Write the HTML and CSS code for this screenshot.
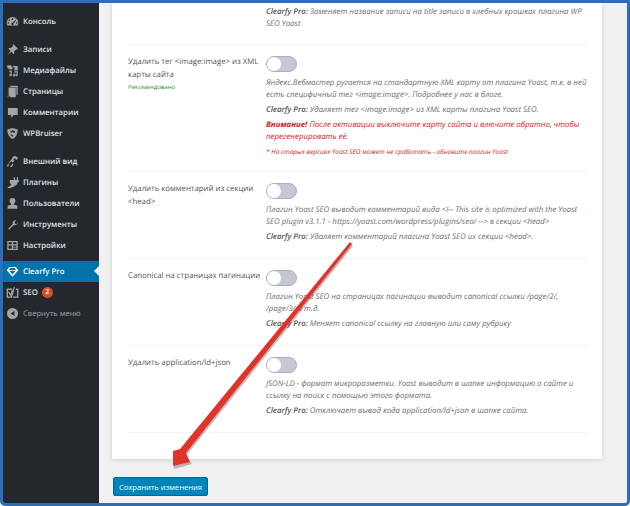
FILE: index.html
```html
<!DOCTYPE html>
<html lang="ru">
<head>
<meta charset="utf-8">
<title>Clearfy Pro</title>
<link rel="stylesheet" href="styles.css">
</head>
<body>
<div class="frame">
  <nav class="sidebar">
    <ul class="menu">
      <li class="item"><svg class="ico" viewBox="0 0 20 20"><path d="M10 3a9 9 0 0 0-9 9c0 1.600.4 3 1.200 4.300h15.600A9 9 0 0 0 19 12a9 9 0 0 0-9-9zm0 2a1.300 1.300 0 1 1 0 2.600A1.300 1.300 0 0 1 10 5zM5 7a1.200 1.200 0 1 1 0 2.400A1.200 1.200 0 0 1 5 7zm9.500.5 1 .8-4 4.700a1.700 1.700 0 1 1-1.200-1zM3.500 11a1.200 1.200 0 1 1 0 2.400 1.200 1.200 0 0 1 0-2.400zm13 0a1.200 1.200 0 1 1 0 2.400 1.200 1.200 0 0 1 0-2.400z" fill-rule="evenodd"/></svg>Консоль</li>
      <li class="sep"></li>
      <li class="item"><svg class="ico" viewBox="0 0 20 20"><path d="M11 1.500 18.500 9l-1.300 1.300-1.200-.6-3.500 3.500c.5 1.500.3 3-.6 4L8.200 13.500 2 18.500l5-6.200L3.300 8.600c1-.9 2.500-1.100 4-.6l3.500-3.500-.6-1.200z"/></svg>Записи</li>
      <li class="item"><svg class="ico" viewBox="0 0 20 20"><path d="M2 2h6v2h2v4H4V6H2zm9 1h7v7h-5V5h-2zM5 10h4v7a2 2 0 1 1-2-2V12H5zm8 1h5v6a1.800 1.800 0 1 1-1.500-1.800V13H14v4.500a1.800 1.800 0 1 1-1-1.600z"/></svg>Медиафайлы</li>
      <li class="item"><svg class="ico" viewBox="0 0 20 20"><path d="M7 1h11v14h-2V3H7zM4 4h11v15H7l-3-3zm-2 2v11l2 2h1l-3-3z"/></svg>Страницы</li>
      <li class="item"><svg class="ico" viewBox="0 0 20 20"><path d="M3 3h15v11h-6l-4 4.500V14H3z"/></svg>Комментарии</li>
      <li class="item"><svg class="ico" viewBox="0 0 20 20"><path d="M10 1.500 18 4c0 7-2.500 12-8 14.500C4.500 16 2 11 2 4zm0 3.500L6 7.500 8 9l2-1.500 2.500 2 1.500-3zM6 11l4 4.500 1-3z" fill-rule="evenodd"/></svg>WPBruiser</li>
      <li class="sep"></li>
      <li class="item"><svg class="ico" viewBox="0 0 20 20"><path d="M13 1.500c2.500 0 5 1.500 5.500 3.500L16 7.500 13.500 5 11 7l2 2-2.500 2.500L8 9.500 4 13.500c.5 1.500.5 3-1 5l-1.500-2 5.500-8.500 2-2c.5-2 2-4.500 4-4.500zM10 13l1.500 1.500-3 4H6z"/></svg>Внешний вид</li>
      <li class="item"><svg class="ico" viewBox="0 0 20 20"><path d="M12 2h2v4h2.500V2h2v4.500H20V9l-2 .5c-.5 3-2.500 5-5 5.500v1c-3 .5-6 3-9 3l-2-2c3-1 5-1.500 6-4-1.500-1-2.500-3-2.500-4.500H6V6h6z"/></svg>Плагины</li>
      <li class="item"><svg class="ico" viewBox="0 0 20 20"><path d="M10 1.500a4.500 4.500 0 0 1 4.500 4.700c0 2-1.200 3.600-2.500 4.300v1.500l5.500 1.500V18h-15v-4.500L8 12v-1.500C6.700 9.800 5.500 8.200 5.500 6.200A4.500 4.500 0 0 1 10 1.500z"/></svg>Пользователи</li>
      <li class="item"><svg class="ico" viewBox="0 0 20 20"><path d="M18 5.500c.4 2-.2 4-2 5-1.300.8-3 .8-4 .4l-6.500 6.500c-1 1-2.500-.4-1.500-1.700l6.400-6.500c-.5-1.500-.2-3 .8-4.200 1.200-1.500 3-2 5-1.500L13 6.200l1 2.500 2.500.8z"/></svg>Инструменты</li>
      <li class="item"><svg class="ico" viewBox="0 0 20 20"><path d="M2 3h16v14H2zm2 2v3h5V5zm7 0v3h5V5zm-7 5v5h5v-5zm7 0v2h5v-2zm0 3v2h5v-2z" fill-rule="evenodd"/></svg>Настройки</li>
      <li class="sep sep-last"></li>
      <li class="item active"><svg class="ico" viewBox="0 0 20 20"><path d="M5 3h10l4 5-9 10L1 8zm1.500 1.700L4.700 7.500h10.600l-1.800-2.800zM5 9l5 5.700L15 9z" fill-rule="evenodd"/></svg>Clearfy Pro</li>
      <li class="item"><svg class="ico" viewBox="0 0 20 20"><path d="M1 4h9l-1 2H3v10h5l-1 2H1zm11-2h2L9 18H7zm4 2h3v14h-9l1-2h6V6h-2zm-11 5 2 3 2-6h2l-4 10H7L3 9z" fill-rule="evenodd"/></svg>SEO<span class="badge">2</span></li>
      <li class="item collapse"><svg class="ico" viewBox="0 0 20 20"><path d="M10 1.500a8.500 8.500 0 1 1 0 17 8.500 8.500 0 0 1 0-17zM13 6l-6 4 6 4z" fill-rule="evenodd"/></svg>Свернуть меню</li>
    </ul>
  </nav>
  <main class="content">
    <section class="card">
      <div class="row row-cut">
        <div class="label"></div>
        <div class="body">
          <p class="desc"><b>Clearfy Pro:</b> Заменяет название записи на title записи в хлебных крошках плагина WP SEO Yoast</p>
        </div>
      </div>
      <div class="row">
        <div class="label">Удалить тег &lt;image:image&gt; из XML карты сайта<span class="rec">Рекомендовано</span></div>
        <div class="body">
          <span class="toggle"></span>
          <p class="desc">Яндекс.Вебмастер ругается на стандартную XML карту от плагина Yoast, т.к. в ней есть специфичный тег &lt;image:image&gt;. Подробнее у нас в блоге.</p>
          <p class="desc"><b>Clearfy Pro:</b> Удаляет тег &lt;image:image&gt; из XML карты плагина Yoast SEO.</p>
          <p class="desc warn"><b>Внимание!</b> После активации выключите карту сайта и влючите обратно, чтобы перегенерировать её.</p>
          <p class="desc warn small">* На старых версиях Yoast SEO может не сработать - обновите плагин Yoast</p>
        </div>
      </div>
      <div class="row">
        <div class="label">Удалить комментарий из секции &lt;head&gt;</div>
        <div class="body">
          <span class="toggle"></span>
          <p class="desc">Плагин Yoast SEO выводит комментарий вида &lt;!-- This site is optimized with the Yoast SEO plugin v3.1.1 - https://yoast.com/wordpress/plugins/seo/ --&gt; в секции &lt;head&gt;</p>
          <p class="desc"><b>Clearfy Pro:</b> Удаляет комментарий плагина Yoast SEO их секции &lt;head&gt;.</p>
        </div>
      </div>
      <div class="row">
        <div class="label">Canonical на страницах пагинации</div>
        <div class="body">
          <span class="toggle"></span>
          <p class="desc">Плагин Yoast SEO на страницах пагинации выводит canonical ссылки /page/2/, /page/3/ и т.д.</p>
          <p class="desc"><b>Clearfy Pro:</b> Меняет canonical ссылку на главную или саму рубрику</p>
        </div>
      </div>
      <div class="row">
        <div class="label">Удалить application/ld+json</div>
        <div class="body">
          <span class="toggle"></span>
          <p class="desc">JSON-LD - формат микроразметки. Yoast выводит в шапке информацию о сайте и ссылку на поиск с помощью этого формата.</p>
          <p class="desc"><b>Clearfy Pro:</b> Отключает вывод кода application/ld+json в шапке сайта.</p>
        </div>
      </div>
    </section>
    <button class="save" type="button">Сохранить изменения</button>
  </main>
  <svg class="arrow" viewBox="0 0 630 506" width="630" height="506">
    <path class="arrow-shadow" d="M353 246 186 456 192 464 174 469 174 452 181 451 350 243z"/>
    <path class="arrow-fill" d="M352 244 186 453 190 462 173 466 173 451 180 449 350 242z"/>
  </svg>
</div>
</body>
</html>
```
FILE: styles.css
```css
* { box-sizing: border-box; }
html, body { margin: 0; padding: 0; }
body {
  width: 630px;
  height: 506px;
  overflow: hidden;
  font-family: "Open Sans", sans-serif;
  text-rendering: geometricPrecision;
  background: #fff;
}
.frame {
  position: relative;
  display: flex;
  width: 630px;
  height: 506px;
  border: 3px solid #2b6fbb;
  border-radius: 0 0 5px 5px;
  overflow: hidden;
  background: #f1f1f1;
}
.sidebar { width: 96px; flex: none; background: #23282d; }
.menu { list-style: none; margin: 0; padding: 8px 0 0; }
.item {
  position: relative;
  display: flex;
  align-items: center;
  height: 21px;
  padding-left: 3px;
  font-size: 7.800px;
  font-weight: 600;
  color: #dfe1e3;
  white-space: nowrap;
}
.ico { width: 13px; height: 13px; margin-right: 4px; flex: none; fill: #a0a5aa; }
.sep { height: 7px; }
.sep-last { height: 5px; }
.active { background: #0073aa; color: #fff; }
.active .ico { fill: #fff; }
.active::after {
  content: "";
  position: absolute;
  right: 0;
  top: 5px;
  border: 5px solid transparent;
  border-left: 0;
  border-right-color: #f1f1f1;
}
.badge {
  display: inline-block;
  width: 11px;
  height: 11px;
  margin-left: 4px;
  border-radius: 50%;
  background: #d54e21;
  color: #fff;
  font-size: 7px;
  line-height: 11px;
  text-align: center;
}
.collapse { color: #a0a5aa; font-weight: 400; font-size: 7.600px; }
.content { flex: 1; min-width: 0; padding: 0 25px 0 13px; }
.card {
  height: 456px;
  padding: 0 15px 0 16px;
  background: #fff;
  box-shadow: 0 1px 5px rgba(0, 0, 0, .14);
}
.row {
  display: flex;
  padding: 11px 0 12px;
  border-bottom: 1px solid #f4f4f4;
}
.row-cut { height: 42px; padding: 3px 0 0; }
.label {
  width: 138px;
  flex: none;
  font-size: 7.800px;
  line-height: 13px;
  color: #555;
}
.rec { display: block; font-size: 6.100px; line-height: 9px; color: #2f8f3a; }
.body { flex: 1; min-width: 0; margin-right: -2px; }
.toggle {
  position: relative;
  display: block;
  width: 31px;
  height: 16px;
  margin-bottom: 5px;
  border-radius: 8px;
  background: #c5c8d3;
  border: 1px solid #acafba;
}
.toggle::after {
  content: "";
  position: absolute;
  left: 0;
  top: 0;
  width: 14px;
  height: 14px;
  border-radius: 50%;
  background: #fff;
}
.desc {
  margin: 0 0 3px;
  font-size: 7.850px;
  line-height: 12px;
  font-style: italic;
  color: #6e6e6e;
}
.desc b { font-weight: 600; color: #555; }
.warn { color: #d11a1f; }
.warn b { font-weight: 700; color: #c9191e; }
.small { margin: 0 0 2px; font-size: 6.500px; line-height: 11px; }
.save {
  display: block;
  width: 95px;
  height: 19px;
  margin: 18px 0 0 1px;
  padding: 0;
  border: 1px solid #006799;
  border-radius: 2px;
  background: #0085ba;
  color: #fff;
  font-family: inherit;
  font-size: 7.600px;
  font-weight: 400;
  text-align: center;
  white-space: nowrap;
}
.arrow { position: absolute; left: -3px; top: -3px; pointer-events: none; }
.arrow-fill { fill: #e2332a; }
.arrow-shadow { fill: rgba(90, 60, 60, .35); }
```
